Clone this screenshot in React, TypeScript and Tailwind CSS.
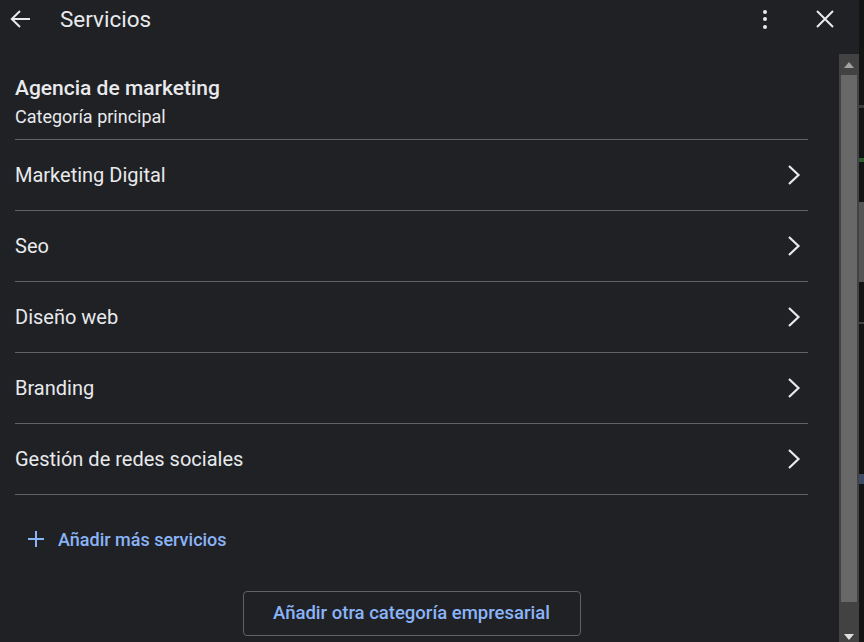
import React from 'react';

const services = ['Marketing Digital', 'Seo', 'Diseño web', 'Branding', 'Gestión de redes sociales'];

function Chevron() {
  return (
    <svg width="14" height="22" viewBox="0 0 14 22" fill="none" className="mr-[7px]">
      <path d="M2 2l9.5 9L2 20" stroke="#e8eaed" strokeWidth="2.2" />
    </svg>
  );
}

function ServiceRow({ label }: { label: string }) {
  return (
    <div className="flex h-[71px] items-center justify-between border-b border-[#5f6368] cursor-pointer">
      <span className="text-[20px] text-[#e8eaed]">{label}</span>
      <Chevron />
    </div>
  );
}

export default function App() {
  return (
    <div className="flex h-[642px] w-[864px] overflow-hidden bg-[#202124] font-['Roboto',sans-serif]">
      <div className="flex w-[859px] flex-col">
        {/* header */}
        <div className="flex h-[54px] shrink-0 items-start pt-[7px]">
          <button className="ml-[10px] flex h-[24px] w-[24px] items-center">
            <svg width="21" height="18" viewBox="0 0 21 18" fill="none">
              <path d="M20 9H2M10 1L1.8 9l8.2 8" stroke="#e8eaed" strokeWidth="2" />
            </svg>
          </button>
          <h1 className="ml-[26px] text-[22.5px] leading-[24px] text-[#e8eaed]">Servicios</h1>
          <div className="flex-1" />
          <button className="flex h-[24px] w-[24px] flex-col items-center justify-center gap-[3.5px]">
            <span className="h-[4px] w-[4px] rounded-full bg-[#e8eaed]" />
            <span className="h-[4px] w-[4px] rounded-full bg-[#e8eaed]" />
            <span className="h-[4px] w-[4px] rounded-full bg-[#e8eaed]" />
          </button>
          <button className="ml-[36px] mr-[22px] flex h-[24px] w-[24px] items-center justify-center">
            <svg width="18" height="18" viewBox="0 0 18 18" fill="none">
              <path d="M1 1l16 16M17 1L1 17" stroke="#e8eaed" strokeWidth="2" />
            </svg>
          </button>
        </div>

        <div className="flex min-h-0 flex-1">
          {/* content */}
          <div className="flex-1 pl-[15px] pr-[31px]">
            <div className="border-b border-[#5f6368] pb-[10px] pt-[22px]">
              <div className="text-[21px] font-medium leading-[24px] text-[#e8eaed]">Agencia de marketing</div>
              <div className="mt-[5px] text-[18px] leading-[24px] text-[#e8eaed]">Categoría principal</div>
            </div>
            {services.map((s) => (
              <ServiceRow key={s} label={s} />
            ))}
            <div className="mt-[20px] flex h-[48px] items-center pl-[12px] text-[#8ab4f8]">
              <svg width="18" height="18" viewBox="0 0 18 18" fill="none">
                <path d="M9 1v16M1 9h16" stroke="#8ab4f8" strokeWidth="2" />
              </svg>
              <span className="ml-[13px] text-[18px] font-medium">Añadir más servicios</span>
            </div>
            <div className="mt-[28px] flex justify-center">
              <button className="h-[45px] w-[338px] rounded-[4px] border border-[#5f6368] text-[18.5px] font-medium text-[#8ab4f8]">
                Añadir otra categoría empresarial
              </button>
            </div>
          </div>

          {/* scrollbar */}
          <div className="flex w-[20px] flex-col bg-[#424242]">
            <div className="flex h-[21px] items-center justify-center">
              <svg width="10" height="6" viewBox="0 0 10 6">
                <path d="M0 6L5 0l5 6z" fill="#a3a3a3" />
              </svg>
            </div>
            <div className="mx-[2px] h-[527px] bg-[#686868]" />
            <div className="flex-1" />
            <div className="flex h-[16px] items-end justify-center pb-[2px]">
              <svg width="10" height="6" viewBox="0 0 10 6">
                <path d="M0 0h10L5 6z" fill="#e0e0e0" />
              </svg>
            </div>
          </div>
        </div>
      </div>
      {/* edge of the window behind */}
      <div className="flex w-[5px] flex-col bg-[#141414]">
        <div className="mt-[105px] h-[3px] bg-[#3a3a3a]" />
        <div className="mt-[50px] h-[4px] bg-[#2e5a2e]" />
        <div className="mt-[40px] h-[80px] bg-[#555]" />
        <div className="mt-[40px] h-[2px] bg-[#444]" />
        <div className="mt-[150px] h-[10px] bg-[#3d4a66]" />
      </div>
    </div>
  );
}
